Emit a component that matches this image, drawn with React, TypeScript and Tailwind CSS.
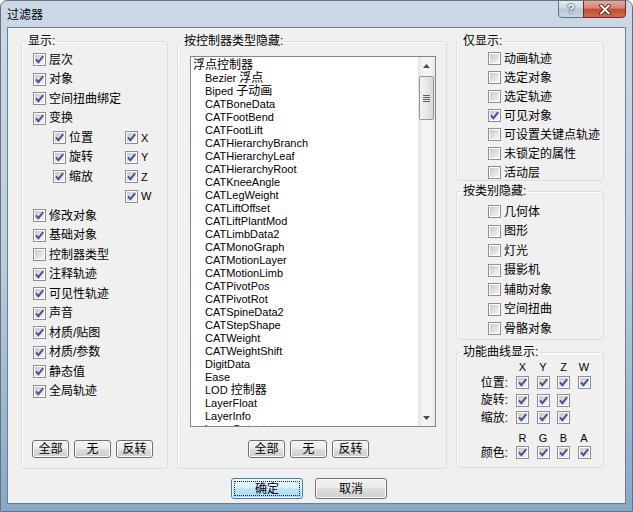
import React from "react";

const CJK_RE = /([\u4e00-\u9fff]+)/;

function Check({ checked = true }: { checked?: boolean }) {
  return (
    <div className="w-[13px] h-[13px] shrink-0 border border-[#8f8f8f] bg-white p-px">
      <div className="relative w-full h-full bg-gradient-to-br from-[#c9c9c9] to-[#f6f6f6]">
        {checked && (
          <svg className="absolute -left-px -top-px" width="11" height="11" viewBox="0 0 11 11">
            <path d="M2 5.3L4.4 8.2L9.2 2.2" fill="none" stroke="#3d5499" strokeWidth="1.9" />
          </svg>
        )}
      </div>
    </div>
  );
}

function Row({ label, checked = true, className = "" }: { label: string; checked?: boolean; className?: string }) {
  return (
    <div className={`flex items-center gap-[3px] ${className}`}>
      <Check checked={checked} />
      <span>{label}</span>
    </div>
  );
}

function Btn({ children, className = "" }: { children: React.ReactNode; className?: string }) {
  return (
    <div
      className={`flex items-center justify-center rounded-[3px] border border-[#707070] bg-[linear-gradient(#f2f2f2,#ebebeb_50%,#dddddd_50%,#cfcfcf)] shadow-[inset_0_0_0_1px_#fbfbfb] text-[12px] leading-none ${className}`}
    >
      {children}
    </div>
  );
}

function Mixed({ text }: { text: string }) {
  const parts = text.split(CJK_RE);
  return (
    <>
      {parts.map((p, i) =>
        CJK_RE.test(p) ? (
          <span key={i} className="text-[12px]">{p}</span>
        ) : (
          <span key={i}>{p}</span>
        )
      )}
    </>
  );
}

const controllers = [
  "Bezier 浮点",
  "Biped 子动画",
  "CATBoneData",
  "CATFootBend",
  "CATFootLift",
  "CATHierarchyBranch",
  "CATHierarchyLeaf",
  "CATHierarchyRoot",
  "CATKneeAngle",
  "CATLegWeight",
  "CATLiftOffset",
  "CATLiftPlantMod",
  "CATLimbData2",
  "CATMonoGraph",
  "CATMotionLayer",
  "CATMotionLimb",
  "CATPivotPos",
  "CATPivotRot",
  "CATSpineData2",
  "CATStepShape",
  "CATWeight",
  "CATWeightShift",
  "DigitData",
  "Ease",
  "LOD 控制器",
  "LayerFloat",
  "LayerInfo",
  "LayerOutput",
];

const groupBox = "border border-[#d5dfe5] rounded-[3px] shadow-[inset_1px_1px_0_#ffffff]";
const legend = "ml-[4px] px-[2px] text-[12px] leading-[14px]";

export default function App() {
  return (
    <div className="w-[633px] h-[512px] flex flex-col overflow-hidden rounded-t-[7px] border border-[#66737f] bg-gradient-to-b from-[#cbd9e7] via-[#bccdde] to-[#86a8c9] font-['Liberation_Sans','Noto_Sans_CJK_SC',sans-serif] text-black text-[12px] leading-[14px]">
      {/* title bar */}
      <div className="h-[26px] shrink-0 flex items-start">
        <div className="pl-[6px] pt-[7px] flex-1">过滤器</div>
        <div className="-mt-px flex mr-[6px]">
          <div className="w-[26px] h-[18px] flex items-center justify-center rounded-bl-[4px] border border-[#5f7185] bg-[linear-gradient(#e3ebf3,#ccd8e5_45%,#b4c6d9_50%,#c9d7e6)] text-white font-bold text-[13px] [text-shadow:0_0_2px_#1d2a38,0_0_1px_#1d2a38]">
            ?
          </div>
          <div className="w-[43px] h-[18px] -ml-px flex items-center justify-center rounded-br-[4px] border border-[#6e2b22] bg-[linear-gradient(#e9a99b,#d98370_45%,#c44a35_50%,#d06a52)]">
            <svg width="14" height="11" viewBox="0 0 14 11">
              <path d="M3 1.5L11 9.5M11 1.5L3 9.5" stroke="#3b1610" strokeWidth="3.6" strokeLinecap="round" />
              <path d="M3 1.5L11 9.5M11 1.5L3 9.5" stroke="#ffffff" strokeWidth="2" strokeLinecap="round" />
            </svg>
          </div>
        </div>
      </div>

      {/* client area */}
      <div className="mx-[6px] mb-[7px] h-[477px] border border-[#6e7e8e] bg-[#f0f0f0] flex flex-col">
        <div className="flex pt-[6px] pl-[13px]">
          {/* 显示 */}
          <fieldset className={`w-[147px] h-[435px] ${groupBox}`}>
            <legend className={legend}>显示:</legend>
            <div className="pt-[2px] pl-[11px] [&>div]:h-[19.5px]">
              <Row label="层次" />
              <Row label="对象" />
              <Row label="空间扭曲绑定" />
              <Row label="变换" />
              <div className="flex items-center">
                <Row label="位置" className="ml-[20px] w-[72px]" />
                <Row label="X" className="text-[11px]" />
              </div>
              <div className="flex items-center">
                <Row label="旋转" className="ml-[20px] w-[72px]" />
                <Row label="Y" className="text-[11px]" />
              </div>
              <div className="flex items-center">
                <Row label="缩放" className="ml-[20px] w-[72px]" />
                <Row label="Z" className="text-[11px]" />
              </div>
              <div className="flex items-center">
                <Row label="W" className="ml-[92px] text-[11px]" />
              </div>
              <Row label="修改对象" />
              <Row label="基础对象" />
              <Row label="控制器类型" checked={false} />
              <Row label="注释轨迹" />
              <Row label="可见性轨迹" />
              <Row label="声音" />
              <Row label="材质/贴图" />
              <Row label="材质/参数" />
              <Row label="静态值" />
              <Row label="全局轨迹" />
            </div>
            <div className="mt-[39px] pl-[10px] flex gap-[5px]">
              <Btn className="w-[37px] h-[18px]">全部</Btn>
              <Btn className="w-[37px] h-[18px]">无</Btn>
              <Btn className="w-[37px] h-[18px]">反转</Btn>
            </div>
          </fieldset>

          {/* 按控制器类型隐藏 */}
          <fieldset className={`ml-[9px] w-[270px] h-[435px] ${groupBox}`}>
            <legend className={legend}>按控制器类型隐藏:</legend>
            <div className="ml-[12px] mt-[8px] w-[246px] h-[371px] border border-[#828790] bg-white flex overflow-hidden">
              <div className="flex-1 pl-[2px] pt-[2px] overflow-hidden text-[11px] leading-[13px]">
                <div className="text-[12px]">浮点控制器</div>
                {controllers.map((c) => (
                  <div key={c} className="pl-[12px] whitespace-nowrap">
                    <Mixed text={c} />
                  </div>
                ))}
              </div>
              {/* scrollbar */}
              <div className="w-[17px] shrink-0 flex flex-col bg-[linear-gradient(90deg,#e4e4e4,#f4f4f4_30%,#f4f4f4_70%,#e9e9e9)]">
                <div className="h-[17px] flex items-center justify-center">
                  <svg width="7" height="4" viewBox="0 0 7 4">
                    <path d="M0 4L3.5 0L7 4Z" fill="#4a4a4a" />
                  </svg>
                </div>
                <div className="mt-[2px] ml-[1px] w-[15px] h-[44px] rounded-[2px] border border-[#979797] bg-[linear-gradient(90deg,#f4f4f4,#e8e8e8_50%,#d6d6d6)] flex flex-col items-center justify-center gap-[1px]">
                  <div className="w-[7px] h-px bg-[#5c5c5c]" />
                  <div className="w-[7px] h-px bg-[#5c5c5c]" />
                  <div className="w-[7px] h-px bg-[#5c5c5c]" />
                  <div className="w-[7px] h-px bg-[#5c5c5c]" />
                </div>
                <div className="flex-1" />
                <div className="h-[17px] flex items-center justify-center">
                  <svg width="7" height="4" viewBox="0 0 7 4">
                    <path d="M0 0L3.5 4L7 0Z" fill="#4a4a4a" />
                  </svg>
                </div>
              </div>
            </div>
            <div className="mt-[13px] pl-[70px] flex gap-[5px]">
              <Btn className="w-[37px] h-[18px]">全部</Btn>
              <Btn className="w-[37px] h-[18px]">无</Btn>
              <Btn className="w-[37px] h-[18px]">反转</Btn>
            </div>
          </fieldset>

          {/* right column */}
          <div className="ml-[9px] w-[148px] flex flex-col">
            <fieldset className={`h-[147px] ${groupBox}`}>
              <legend className={legend}>仅显示:</legend>
              <div className="pt-px pl-[31px] [&>div]:h-[19px]">
                <Row label="动画轨迹" checked={false} />
                <Row label="选定对象" checked={false} />
                <Row label="选定轨迹" checked={false} />
                <Row label="可见对象" />
                <Row label="可设置关键点轨迹" checked={false} />
                <Row label="未锁定的属性" checked={false} />
                <Row label="活动层" checked={false} />
              </div>
            </fieldset>

            <fieldset className={`mt-[3px] h-[156px] ${groupBox}`}>
              <legend className={legend}>按类别隐藏:</legend>
              <div className="pt-[4px] pl-[31px] [&>div]:h-[19.5px]">
                <Row label="几何体" checked={false} />
                <Row label="图形" checked={false} />
                <Row label="灯光" checked={false} />
                <Row label="摄影机" checked={false} />
                <Row label="辅助对象" checked={false} />
                <Row label="空间扭曲" checked={false} />
                <Row label="骨骼对象" checked={false} />
              </div>
            </fieldset>

            <fieldset className={`mt-[5px] h-[123px] ${groupBox}`}>
              <legend className={legend}>功能曲线显示:</legend>
              <div className="mt-px h-[14px] flex items-center pl-[59px] text-[11px]">
                {["X", "Y", "Z", "W"].map((l) => (
                  <div key={l} className="w-[20.5px]">
                    <div className="w-[13px] text-center">{l}</div>
                  </div>
                ))}
              </div>
              {[
                { label: "位置:", n: 4 },
                { label: "旋转:", n: 3 },
                { label: "缩放:", n: 3 },
              ].map((r) => (
                <div key={r.label} className="h-[17.5px] flex items-center">
                  <div className="w-[51px] text-right">{r.label}</div>
                  <div className="ml-[8px] flex">
                    {Array.from({ length: r.n }).map((_, i) => (
                      <div key={i} className="w-[20.5px]">
                        <Check />
                      </div>
                    ))}
                  </div>
                </div>
              ))}
              <div className="mt-[4.5px] h-[14px] flex items-center pl-[59px] text-[11px]">
                {["R", "G", "B", "A"].map((l) => (
                  <div key={l} className="w-[20.5px]">
                    <div className="w-[13px] text-center">{l}</div>
                  </div>
                ))}
              </div>
              <div className="h-[15px] flex items-center">
                <div className="w-[51px] text-right">颜色:</div>
                <div className="ml-[8px] flex">
                  {[0, 1, 2, 3].map((i) => (
                    <div key={i} className="w-[20.5px]">
                      <Check />
                    </div>
                  ))}
                </div>
              </div>
            </fieldset>
          </div>
        </div>

        {/* dialog buttons */}
        <div className="mt-[9px] pl-[223px] flex gap-[12px]">
          <div className="w-[72px] h-[21px] p-[2px] rounded-[3px] border border-[#3c7fb1] bg-[linear-gradient(#eaf6fd,#d9f0fc_50%,#bee6fd_50%,#a7d9f5)] shadow-[inset_0_0_0_1px_#f4fbff]">
            <div className="w-full h-full border border-dotted border-[#222] flex items-center justify-center text-[12px] leading-none">
              确定
            </div>
          </div>
          <Btn className="w-[72px] h-[21px]">取消</Btn>
        </div>
      </div>
    </div>
  );
}
